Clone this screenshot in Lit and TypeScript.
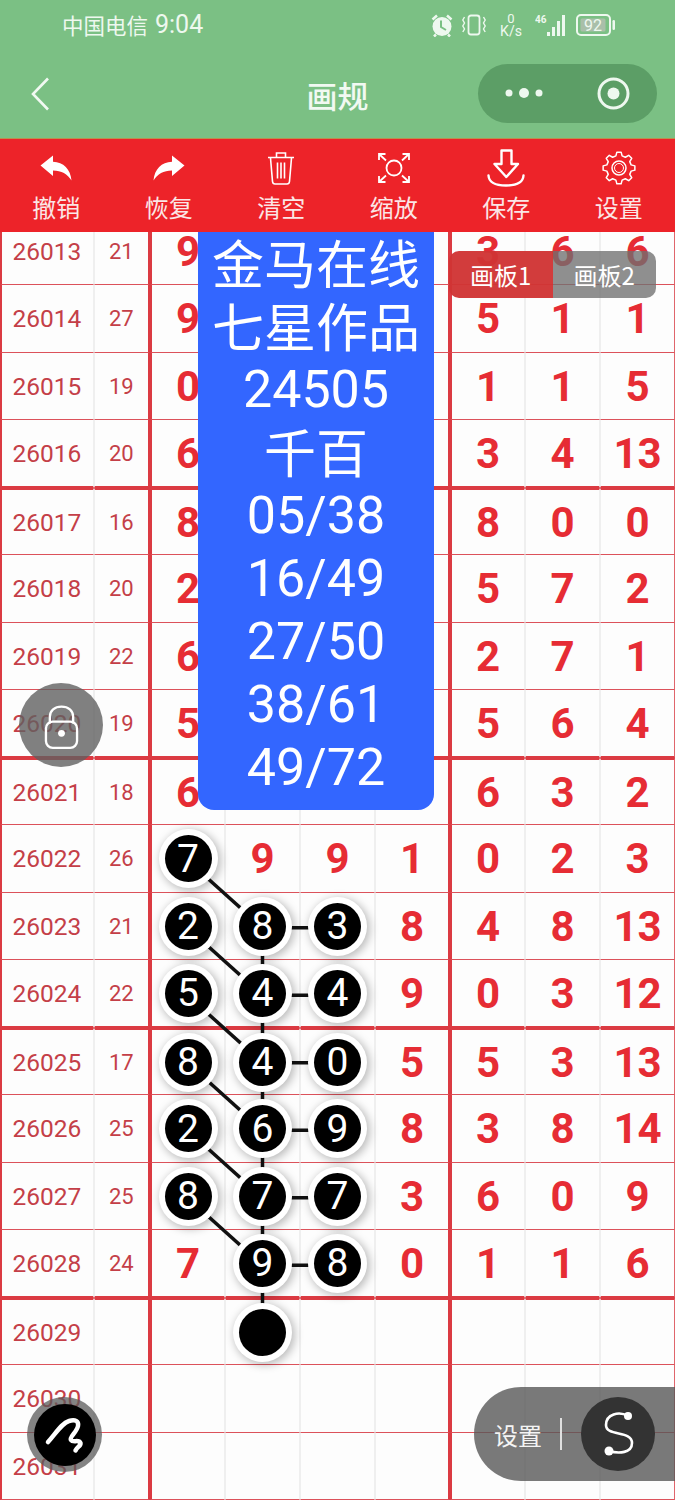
import { LitElement, css, html, svg } from "lit";
import { customElement } from "lit/decorators.js";

type Row = [string, string, string[]];

// id, sum, then the seven number columns
const rows: Row[] = [
  ["26013", "21", ["9", "", "", "", "3", "6", "6"]],
  ["26014", "27", ["9", "", "", "", "5", "1", "1"]],
  ["26015", "19", ["0", "", "", "", "1", "1", "5"]],
  ["26016", "20", ["6", "", "", "", "3", "4", "13"]],
  ["26017", "16", ["8", "", "", "", "8", "0", "0"]],
  ["26018", "20", ["2", "", "", "", "5", "7", "2"]],
  ["26019", "22", ["6", "", "", "", "2", "7", "1"]],
  ["26020", "19", ["5", "", "", "", "5", "6", "4"]],
  ["26021", "18", ["6", "", "", "", "6", "3", "2"]],
  ["26022", "26", ["7", "9", "9", "1", "0", "2", "3"]],
  ["26023", "21", ["2", "8", "3", "8", "4", "8", "13"]],
  ["26024", "22", ["5", "4", "4", "9", "0", "3", "12"]],
  ["26025", "17", ["8", "4", "0", "5", "5", "3", "13"]],
  ["26026", "25", ["2", "6", "9", "8", "3", "8", "14"]],
  ["26027", "25", ["8", "7", "7", "3", "6", "0", "9"]],
  ["26028", "24", ["7", "9", "8", "0", "1", "1", "6"]],
  ["26029", "", ["", "", "", "", "", "", ""]],
  ["26030", "", ["", "", "", "", "", "", ""]],
  ["26031", "", ["", "", "", "", "", "", ""]],
];

const ROW_H = 67.5;
const X = [187.5, 262.5, 337.5];

const isBall = (r: number, c: number) => {
  if (c === 0) return r >= 9 && r <= 14;
  if (c === 1) return r >= 10 && r <= 16;
  if (c === 2) return r >= 10 && r <= 15;
  return false;
};

const cy = (r: number) => (r + 0.5) * ROW_H + 1;

function gearPath(cx: number, cyy: number, outer: number, inner: number, teeth: number) {
  const pts: string[] = [];
  const step = (Math.PI * 2) / teeth;
  for (let i = 0; i < teeth; i++) {
    const a = i * step - Math.PI / 2;
    const seq: [number, number][] = [
      [inner, a - step * 0.32],
      [outer, a - step * 0.17],
      [outer, a + step * 0.17],
      [inner, a + step * 0.32],
    ];
    for (const [rad, an] of seq) {
      pts.push(`${(cx + rad * Math.cos(an)).toFixed(2)} ${(cyy + rad * Math.sin(an)).toFixed(2)}`);
    }
  }
  return "M" + pts.join("L") + "Z";
}

const tools = [
  {
    label: "撤销",
    icon: html`<svg width="32" height="26" viewBox="0 0 32 26"><path fill="#fff" d="M.5 10.500 13 .5v6.200C23.500 7 30.500 14 31.500 25.500 27.500 19 21.500 15.500 13 15.500v5.500Z"/></svg>`,
  },
  {
    label: "恢复",
    icon: html`<svg width="32" height="26" viewBox="0 0 32 26"><path fill="#fff" d="M31.500 10.500 19 .5v6.200C8.500 7 1.500 14 .5 25.500 4.500 19 10.500 15.500 19 15.500v5.500Z"/></svg>`,
  },
  {
    label: "清空",
    icon: html`<svg width="28" height="34" viewBox="0 0 28 34" fill="none" stroke="#fff" stroke-width="1.600"><path d="M1 6.500h26M9.500 6V2h9v4M3.500 7l2 23.500c.2 1.700 1 2.500 2.500 2.500h12c1.500 0 2.300-.8 2.500-2.500L24.500 7M10.500 11.500v16M14 11.500v16M17.500 11.500v16"/></svg>`,
  },
  {
    label: "缩放",
    icon: html`<svg width="34" height="32" viewBox="0 0 34 32" fill="none" stroke="#fff" stroke-width="1.800"><circle cx="17" cy="16" r="7.500"/><path d="M2 8V2h6.500M2 2l7 6.500M32 8V2h-6.500M32 2l-7 6.500M2 24v6h6.500M2 30l7-6.500M32 24v6h-6.500M32 30l-7-6.500"/></svg>`,
  },
  {
    label: "保存",
    icon: html`<svg width="38" height="38" viewBox="0 0 38 38" fill="none" stroke="#fff" stroke-width="2.400" stroke-linejoin="round" stroke-linecap="round"><path d="M14.500 1.500h10V15H31L19.300 28 7.500 15h7Z"/><path d="M1.500 26.500C2 34 8 36.500 19 36.500s17-2.500 17.500-10"/></svg>`,
  },
  {
    label: "设置",
    icon: html`<svg width="34" height="34" viewBox="0 0 34 34" fill="none" stroke="#fff" stroke-width="1.500" stroke-linejoin="round"><path d="${gearPath(17, 17, 16, 12.5, 8)}"/><circle cx="17" cy="17" r="7"/><circle cx="17" cy="17" r="4.500" stroke-width="1"/></svg>`,
  },
];

@customElement("app-root")
export class AppRoot extends LitElement {
  static styles = css`
    :host {
      display: flex;
      flex-direction: column;
      position: relative;
      width: 675px;
      height: 1500px;
      overflow: hidden;
      background: #fdfdfd;
      font-family: "Noto Sans CJK SC", Roboto, sans-serif;
    }

    .top {
      background: #7bc084;
      height: 139px;
      border-bottom: 1px solid #b9914f;
      box-sizing: border-box;
      color: #eef8ef;
    }

    .status {
      height: 50px;
      display: flex;
      align-items: center;
      justify-content: space-between;
      padding: 0 60px 0 62px;
    }

    .carrier {
      display: flex;
      align-items: center;
      gap: 7px;
      font-size: 21.500px;
      line-height: 30px;
    }

    .carrier b {
      font-family: Roboto, sans-serif;
      font-weight: 400;
      font-size: 25px;
    }

    .sys {
      display: flex;
      align-items: center;
      gap: 8px;
      color: #eef8ef;
    }

    .speed {
      display: flex;
      flex-direction: column;
      align-items: center;
      width: 26px;
      margin: 0 3px 0 4px;
      font-family: Roboto, sans-serif;
      font-size: 14px;
      line-height: 13px;
    }

    .speed span:first-child {
      font-size: 13px;
      line-height: 12px;
    }

    .nav {
      height: 88px;
      display: flex;
      align-items: center;
      justify-content: space-between;
      padding: 0 18px 0 30px;
      position: relative;
    }

    .title {
      position: absolute;
      left: 0;
      right: 0;
      text-align: center;
      font-size: 31px;
      font-weight: 500;
      color: #f1f9f2;
    }

    .capsule {
      width: 179px;
      height: 59px;
      border-radius: 30px;
      background: #5c9e66;
      display: flex;
      align-items: center;
      justify-content: space-between;
      padding: 0 27px;
      box-sizing: border-box;
      margin-top: -2px;
    }

    .tools {
      height: 93px;
      background: #ed2329;
      display: flex;
    }

    .tool {
      flex: 1;
      display: flex;
      flex-direction: column;
      align-items: center;
      color: #fbe6e6;
      font-size: 24px;
      line-height: 34px;
    }

    .tool .ico {
      height: 50px;
      display: flex;
      align-items: center;
      justify-content: center;
      padding-top: 8px;
      box-sizing: border-box;
      margin-bottom: 1px;
    }

    .sheet {
      flex: 1;
      overflow: hidden;
    }

    .grid {
      position: relative;
      display: grid;
      grid-template-columns: 93.750px 56.250px repeat(7, 75px);
      grid-auto-rows: 67.500px;
      margin-top: -14.500px;
      color: #e62c34;
    }

    .cell {
      box-sizing: border-box;
      display: flex;
      align-items: center;
      justify-content: center;
      padding-top: 1px;
      border-left: 1px solid #efefef;
      border-right: 1px solid #efefef;
      border-bottom: 1px solid #dc525b;
      font-family: Roboto, sans-serif;
      font-size: 42px;
      font-weight: 700;
      min-width: 0;
    }

    .cell.id {
      font-size: 24.500px;
      font-weight: 400;
      color: #c43f48;
      border-left: 2px solid #db3a42;
      padding-right: 1px;
    }

    .cell.sum {
      font-size: 22px;
      font-weight: 400;
      color: #c43f48;
      border-right: 2px solid #db3a42;
    }

    .cell.after-thick {
      border-left: 2px solid #db3a42;
    }

    .cell.before-thick {
      border-right: 2px solid #db3a42;
    }

    .cell.last {
      border-right: 1px solid #e0656c;
    }

    .cell.block-end {
      border-bottom: 2px solid #db3a42;
    }

    .cell.block-start {
      border-top: 2px solid #db3a42;
    }

    .ball {
      position: relative;
      z-index: 2;
      flex: none;
      width: 47px;
      height: 47px;
      border-radius: 50%;
      background: #000;
      color: #fff;
      display: flex;
      align-items: center;
      justify-content: center;
      font-size: 39px;
      font-weight: 400;
      box-shadow: 0 0 0 6px #fff, 2px 2px 8px 7px rgba(0, 0, 0, 0.26);
    }

    .links {
      position: absolute;
      left: 0;
      top: 0;
      z-index: 1;
      pointer-events: none;
    }

    .board {
      position: absolute;
      z-index: 3;
      left: 198px;
      top: 232px;
      width: 236px;
      height: 578px;
      box-sizing: border-box;
      background: #3366ff;
      border-radius: 0 0 16px 16px;
      color: #fff;
      text-align: center;
      font-size: 52px;
      line-height: 60px;
    }

    .board div {
      height: 63px;
    }

    .board .num {
      font-family: Roboto, sans-serif;
      font-size: 52px;
      line-height: 64px;
    }

    .tabs {
      position: absolute;
      z-index: 4;
      left: 449px;
      top: 251px;
      width: 207px;
      height: 47px;
      display: flex;
      color: #fff;
      font-size: 24px;
    }

    .tab {
      flex: 1;
      display: flex;
      align-items: center;
      justify-content: center;
      background: rgba(112, 112, 112, 0.78);
      border-radius: 0 10px 10px 0;
    }

    .tab.on {
      background: rgba(208, 52, 52, 0.96);
      border-radius: 10px 0 0 10px;
    }

    .lock {
      position: absolute;
      z-index: 4;
      left: 19px;
      top: 683px;
      width: 84px;
      height: 84px;
      box-sizing: border-box;
      padding-top: 4px;
      border-radius: 50%;
      background: rgba(96, 96, 96, 0.8);
      display: flex;
      align-items: center;
      justify-content: center;
    }

    .brush {
      position: absolute;
      z-index: 4;
      left: 27px;
      top: 1397px;
      width: 75px;
      height: 75px;
      border-radius: 50%;
      background: rgba(90, 90, 90, 0.75);
      display: flex;
      align-items: center;
      justify-content: center;
    }

    .brush span {
      width: 62px;
      height: 62px;
      border-radius: 50%;
      background: #000;
      display: flex;
      align-items: center;
      justify-content: center;
    }

    .pill {
      position: absolute;
      z-index: 4;
      left: 474px;
      top: 1387px;
      width: 201px;
      height: 94px;
      box-sizing: border-box;
      border-radius: 47px 0 0 47px;
      background: rgba(88, 88, 88, 0.8);
      display: flex;
      align-items: center;
      padding-left: 20px;
      color: #f4f4f4;
      font-size: 24px;
    }

    .pill i {
      width: 2px;
      height: 32px;
      background: #e0e0e0;
      margin: 0 19px 0 18px;
    }

    .pill .s {
      width: 74px;
      height: 74px;
      border-radius: 50%;
      background: #333;
      display: flex;
    }
  `;

  private renderLinks() {
    const lines: [number, number, number, number][] = [];
    for (let r = 9; r <= 14; r++) lines.push([X[0], cy(r), X[1], cy(r + 1)]);
    for (let r = 10; r <= 15; r++) lines.push([X[1], cy(r), X[2], cy(r)]);
    lines.push([X[1], cy(10), X[1], cy(16)]);
    return html`<svg class="links" width="675" height="${rows.length * ROW_H}">
      ${lines.map(
        ([x1, y1, x2, y2]) =>
          svg`<line x1="${x1}" y1="${y1}" x2="${x2}" y2="${y2}" stroke="#111" stroke-width="3.500"/>`
      )}
    </svg>`;
  }

  private renderRow(row: Row, r: number) {
    const [id, sum, cols] = row;
    const edge = `${(r + 1) % 4 === 0 ? "block-end" : ""} ${r % 4 === 0 && r > 0 ? "block-start" : ""}`;
    return html`
      <div class="cell id ${edge}">${id}</div>
      <div class="cell sum ${edge}">${sum}</div>
      ${cols.map((v, c) => {
        const cls = [
          c === 0 ? "after-thick" : "",
          c === 3 ? "before-thick" : "",
          c === 4 ? "after-thick" : "",
          c === 6 ? "last" : "",
        ].join(" ");
        return html`<div class="cell ${cls} ${edge}">
          ${isBall(r, c) ? html`<span class="ball">${v}</span>` : v}
        </div>`;
      })}
    `;
  }

  render() {
    return html`
      <div class="top">
        <div class="status">
          <div class="carrier">中国电信<b>9:04</b></div>
          <div class="sys">
            <svg width="24" height="23" viewBox="0 0 24 23">
              <circle cx="12" cy="12.500" r="9.500" fill="#eef8ef" />
              <path d="M2.500 5.500 7 1.500M21.500 5.500l-4.500-4M6 20.500l-2 2M18 20.500l2 2" stroke="#eef8ef" stroke-width="2.500" />
              <path d="M11 6.500v6.500l5 3" fill="none" stroke="#7bc084" stroke-width="2" />
            </svg>
            <svg width="24" height="22" viewBox="0 0 24 22" fill="none" stroke="#eef8ef" stroke-width="1.800">
              <rect x="6.500" y="1.500" width="11" height="19" rx="2.500" />
              <path d="M2.500 3 .8 6l1.700 3-1.700 3 1.700 3-1.700 3M21.500 3l1.700 3-1.700 3 1.700 3-1.700 3 1.700 3" stroke-width="1.400" />
            </svg>
            <div class="speed"><span>0</span><span>K/s</span></div>
            <svg width="33" height="24" viewBox="0 0 33 24">
              <text x="0" y="10" font-family="Roboto, sans-serif" font-size="10" font-weight="700" fill="#eef8ef">46</text>
              <g fill="#eef8ef">
                <rect x="12" y="19" width="3" height="4" />
                <rect x="17" y="14" width="3" height="9" />
                <rect x="22" y="8" width="3" height="15" />
                <rect x="27" y="2" width="3" height="21" />
              </g>
            </svg>
            <svg width="39" height="22" viewBox="0 0 39 22">
              <rect x="1" y="1" width="33" height="20" rx="4" fill="none" stroke="#eef8ef" stroke-width="2" />
              <rect x="4.500" y="4.500" width="25" height="13" rx="1.500" fill="#a9bfa9" />
              <rect x="36.500" y="6" width="2.500" height="10" rx="1.200" fill="#eef8ef" />
              <text x="17" y="17" text-anchor="middle" font-family="Roboto, sans-serif" font-size="16" fill="#eef8ef">92</text>
            </svg>
          </div>
        </div>
        <div class="nav">
          <svg width="20" height="34" viewBox="0 0 20 34" fill="none" stroke="#f1f9f2" stroke-width="2.600">
            <path d="M18 1.500 3 17l15 15.500" />
          </svg>
          <div class="title">画规</div>
          <div class="capsule">
            <svg width="38" height="14" viewBox="0 0 38 14" fill="#eef8ef">
              <circle cx="4" cy="7" r="3.500" />
              <circle cx="19" cy="7" r="5" />
              <circle cx="34" cy="7" r="3.500" />
            </svg>
            <svg width="33" height="33" viewBox="0 0 33 33">
              <circle cx="16.500" cy="16.500" r="14.500" fill="none" stroke="#eef8ef" stroke-width="3" />
              <circle cx="16.500" cy="16.500" r="6" fill="#eef8ef" />
            </svg>
          </div>
        </div>
      </div>

      <div class="tools">
        ${tools.map((t) => html`<div class="tool"><div class="ico">${t.icon}</div>${t.label}</div>`)}
      </div>

      <div class="sheet">
        <div class="grid">
          ${rows.map((row, r) => this.renderRow(row, r))} ${this.renderLinks()}
        </div>
      </div>

      <div class="board">
        <div>金马在线</div>
        <div>七星作品</div>
        <div class="num">24505</div>
        <div>千百</div>
        <div class="num">05/38</div>
        <div class="num">16/49</div>
        <div class="num">27/50</div>
        <div class="num">38/61</div>
        <div class="num">49/72</div>
      </div>

      <div class="tabs">
        <div class="tab on">画板1</div>
        <div class="tab">画板2</div>
      </div>

      <div class="lock">
        <svg width="35" height="45" viewBox="0 0 36 46" fill="none" stroke="#fff" stroke-width="2.400">
          <path d="M6 19v-7C6 5.500 11 1.500 18 1.500S30 5.500 30 12v7" />
          <rect x="2" y="17" width="32" height="27" rx="7" />
          <circle cx="18" cy="29" r="3.500" fill="#fff" stroke="none" />
        </svg>
      </div>

      <div class="brush">
        <span>
          <svg width="62" height="62" viewBox="0 0 62 62" fill="none" stroke="#fff" stroke-width="4.500" stroke-linecap="round" stroke-linejoin="round">
            <path d="M14 38C22 29 28 19 35 17c6-2 10 0 9 5-1 6-9 11-7 14 2 3 8-1 9.500 3 .5 3-3.500 4-5 7.500" />
          </svg>
        </span>
      </div>

      <div class="pill">
        设置<i></i>
        <span class="s">
          <svg width="74" height="74" viewBox="0 0 74 74" fill="none" stroke="#fff" stroke-width="2.600">
            <path d="M47 19C38 14 25 17 25 28c0 12 26 5 26 18 0 10-13 11-23 8" />
            <circle cx="47" cy="19" r="4" fill="#fff" stroke="none" />
            <circle cx="28" cy="54" r="4.500" fill="#fff" stroke="none" />
          </svg>
        </span>
      </div>
    `;
  }
}
